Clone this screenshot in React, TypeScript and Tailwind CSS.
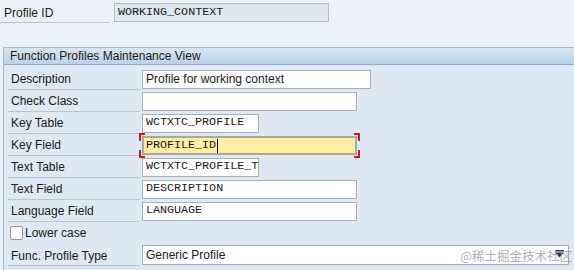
import React from "react";

const sans = { fontFamily: '"Liberation Sans", Arial, sans-serif' };
const mono = { fontFamily: '"Liberation Mono", "Courier New", monospace' };

type Row = { label: string; value: string; w: string; mono?: boolean; focus?: boolean };

const rows: Row[] = [
  { label: "Description", value: "Profile for working context", w: "w-[229px]" },
  { label: "Check Class", value: "", w: "w-[215px]" },
  { label: "Key Table", value: "WCTXTC_PROFILE", w: "w-[117px]", mono: true },
  { label: "Key Field", value: "PROFILE_ID", w: "w-[215px]", mono: true, focus: true },
  { label: "Text Table", value: "WCTXTC_PROFILE_T", w: "w-[117px]", mono: true },
  { label: "Text Field", value: "DESCRIPTION", w: "w-[215px]", mono: true },
  { label: "Language Field", value: "LANGUAGE", w: "w-[215px]", mono: true },
];

function Field({ r }: { r: Row }) {
  if (r.focus) {
    return (
      <div className="relative ml-[2px] h-[19px] flex items-center">
        <div
          className={`${r.w} h-[19px] bg-[#fdeea2] border-2 border-[#a9a9a0] flex items-center pl-[2px] pt-[1px] text-[11.7px] text-[#1a1a1a]`}
          style={mono}
        >
          {r.value}
          <span className="inline-block w-[1px] h-[14px] bg-black ml-[1px]" />
        </div>
        <span className="absolute left-[-3px] top-[-3px] w-[6px] h-[8px] border-l-2 border-t-2 border-[#d6141c]" />
        <span className="absolute left-[-3px] bottom-[-3px] w-[6px] h-[8px] border-l-2 border-b-2 border-[#d6141c]" />
        <span className="absolute right-[-3px] top-[-3px] w-[6px] h-[8px] border-r-2 border-t-2 border-[#d6141c]" />
        <span className="absolute right-[-3px] bottom-[-3px] w-[6px] h-[8px] border-r-2 border-b-2 border-[#d6141c]" />
      </div>
    );
  }
  return (
    <div
      className={`ml-[2px] ${r.w} h-[19px] bg-white border border-[#a7b0ba] flex items-center pl-[3px] text-[#1a1a1a] ${r.mono ? "text-[11.7px]" : "text-[12px]"}`}
      style={r.mono ? mono : sans}
    >
      {r.value}
    </div>
  );
}

export default function App() {
  return (
    <div className="relative w-[574px] h-[270px] overflow-hidden bg-[#ecf1f7] text-[12px] text-[#1a1a1a]" style={sans}>
      {/* Profile ID */}
      <div className="flex items-start pt-[3px] h-[47px]">
        <div className="w-[110px] h-[20px] border-b border-[#b9c5d2] flex items-center pl-[4px] pt-[1px] text-[12px]">
          Profile ID
        </div>
        <div
          className="ml-[4px] w-[215px] h-[19px] bg-[#dfe7ef] border border-[#b2bcc7] flex items-center pl-[3px] text-[11.7px] text-[#222]"
          style={mono}
        >
          WORKING_CONTEXT
        </div>
      </div>

      {/* Panel */}
      <div className="ml-[3px] h-[223px] bg-[#dfe9f3] border-l border-t border-[#9fb6d1]">
        <div className="h-[17px] bg-gradient-to-b from-[#d8e5f2] to-[#bcd2ea] border-b border-[#8ea9c9] flex items-center pl-[6px] text-[12px] text-[#1a1a1a]">
          Function Profiles Maintenance View
        </div>
        <div className="pt-[3px] flex flex-col">
          {rows.map((r) => (
            <div key={r.label} className="flex items-center h-[22px]">
              <div className="ml-[4px] w-[132px] h-[22px] border-b border-[#b9c5d2] flex items-center pl-[3px] pt-[1px]">
                {r.label}
              </div>
              <Field r={r} />
            </div>
          ))}
          <div className="flex items-center h-[22px] pl-[6px]">
            <div className="w-[13px] h-[14px] bg-white border border-[#8b959f] rounded-[2px]" />
            <span className="ml-[2px]">Lower case</span>
          </div>
          <div className="flex items-center h-[22px]">
            <div className="ml-[4px] w-[132px] h-[22px] border-b border-[#b9c5d2] flex items-center pl-[3px] pt-[2px]">
              Func. Profile Type
            </div>
            <div className="ml-[2px] w-[427px] h-[20px] bg-white border border-[#a7b0ba] flex items-center pl-[3px] justify-between">
              <span>Generic Profile</span>
              <svg width="9" height="8" viewBox="0 0 9 8" className="mr-[4px] mb-[3px]">
                <rect x="0" y="0" width="9" height="1.5" fill="#22345a" />
                <polygon points="0,2.5 9,2.5 4.5,7.5" fill="#22345a" />
              </svg>
            </div>
          </div>
        </div>
      </div>

      <div
        className="absolute right-[2px] bottom-[8px] text-[12.5px] text-[#9a9a9a]/80 leading-none"
        style={{ fontFamily: '"Noto Sans CJK SC", "Liberation Sans", sans-serif' }}
      >
        @稀土掘金技术社区
      </div>
    </div>
  );
}
